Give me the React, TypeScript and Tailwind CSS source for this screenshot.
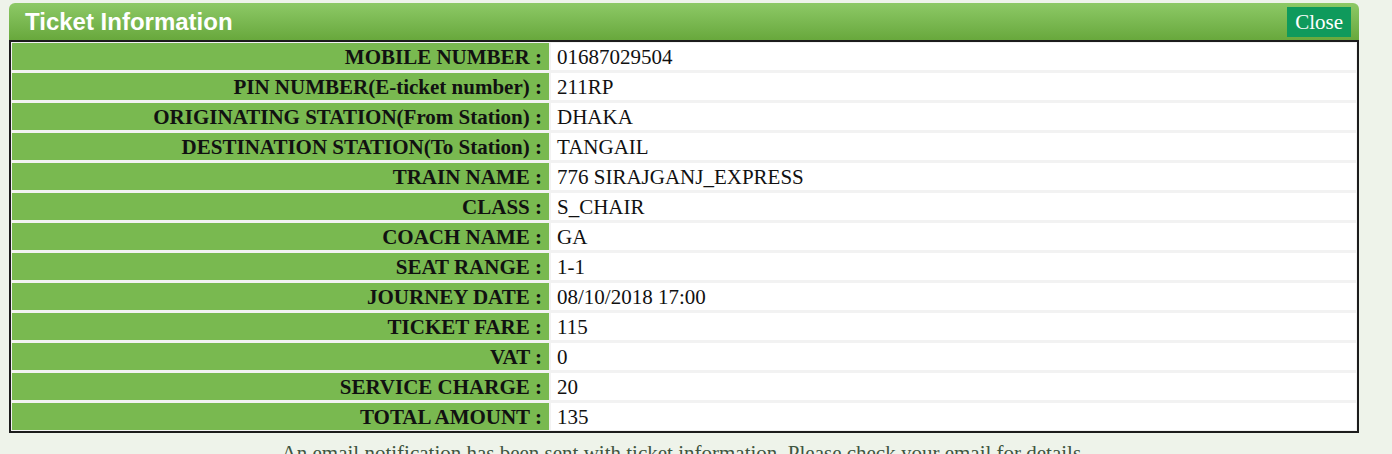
const rows: [string, string][] = [
  ["MOBILE NUMBER :", "01687029504"],
  ["PIN NUMBER(E-ticket number) :", "211RP"],
  ["ORIGINATING STATION(From Station) :", "DHAKA"],
  ["DESTINATION STATION(To Station) :", "TANGAIL"],
  ["TRAIN NAME :", "776 SIRAJGANJ_EXPRESS"],
  ["CLASS :", "S_CHAIR"],
  ["COACH NAME :", "GA"],
  ["SEAT RANGE :", "1-1"],
  ["JOURNEY DATE :", "08/10/2018 17:00"],
  ["TICKET FARE :", "115"],
  ["VAT :", "0"],
  ["SERVICE CHARGE :", "20"],
  ["TOTAL AMOUNT :", "135"],
];

export default function App() {
  return (
    <div className="h-[454px] w-[1392px] overflow-hidden bg-[#eef3ea] pt-[3px] font-['Liberation_Serif',serif]">
      <div className="ml-[9px] w-[1350px]">
        {/* Header */}
        <div className="flex h-[37px] items-center justify-between rounded-t-[6px] bg-gradient-to-b from-[#8dc966] to-[#68a83c] pl-[16px] pr-[8px]">
          <span className="font-['Liberation_Sans',sans-serif] text-[24px] font-bold leading-none text-white">Ticket Information</span>
          <button className="h-[30px] bg-[#0f9a5c] px-[8px] pt-px text-[21px] leading-none text-white">Close</button>
        </div>

        {/* Details */}
        <div className="border-2 border-[#1c1c1c] bg-[#f2f2f2] p-px">
          <div className="grid grid-cols-[537px_1fr] gap-x-[2px] gap-y-[3px]">
            {rows.map(([label, value]) => (
              <div key={label} className="contents">
                <div className="flex h-[27px] items-center justify-end bg-[#79b950] pr-[7px] pt-[3px] text-[21px] font-bold text-[#111]">
                  {label}
                </div>
                <div className="flex h-[27px] items-center bg-white pl-[6px] pt-[3px] text-[21px] text-[#111]">
                  {value}
                </div>
              </div>
            ))}
          </div>
        </div>

        <p className="mt-[8px] text-center text-[21px] leading-[24px] text-[#3f553f]">
          An email notification has been sent with ticket information. Please check your email for details.
        </p>
      </div>
    </div>
  );
}
